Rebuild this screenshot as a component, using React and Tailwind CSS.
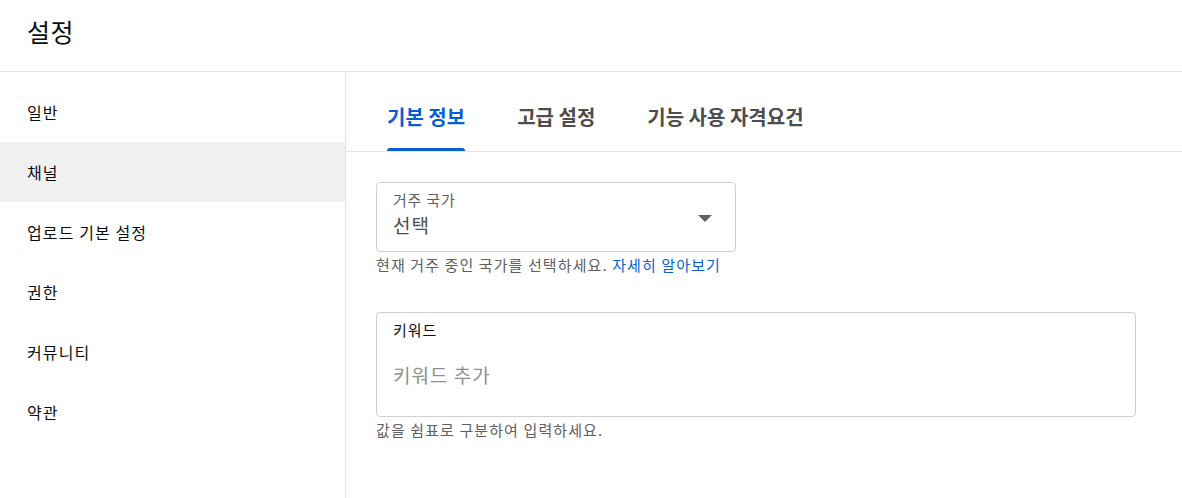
import React from "react";

const font = { fontFamily: '"Noto Sans CJK KR", "Noto Sans", sans-serif' };

export default function App() {
  const items = ["일반", "채널", "업로드 기본 설정", "권한", "커뮤니티", "약관"];
  return (
    <div className="w-[1182px] h-[498px] bg-white flex flex-col text-[#0d0d0d] overflow-hidden" style={font}>
      <div className="h-[72px] shrink-0 border-b border-[#e5e5e5] flex items-center px-[27px]">
        <h1 className="text-[25px] tracking-[0.5px] leading-none font-normal text-[#0d0d0d] -mt-[9px]">설정</h1>
      </div>
      <div className="flex flex-1 min-h-0">
        <nav className="w-[346px] shrink-0 border-r border-[#e5e5e5] pt-[10px] flex flex-col">
          {items.map((t) => (
            <div
              key={t}
              className={`h-[60px] flex items-center px-[27px] text-[16px] tracking-[1.1px] text-[#0d0d0d] ${t === "채널" ? "bg-[#f0f0f0]" : ""}`}
            >
              {t}
            </div>
          ))}
        </nav>
        <main className="flex-1 flex flex-col">
          <div className="h-[80px] border-b border-[#e5e5e5] flex items-end pl-[41px] gap-[52px]">
            <div className="flex flex-col items-stretch">
              <span className="text-[20px] font-bold text-[#065fd4] leading-none pb-[21px]">기본 정보</span>
              <div className="h-[3px] bg-[#065fd4] rounded-t-[3px]" />
            </div>
            <div className="flex flex-col">
              <span className="text-[20px] font-bold text-[#4d4d4d] leading-none pb-[24px]">고급 설정</span>
            </div>
            <div className="flex flex-col">
              <span className="text-[20px] font-bold text-[#4d4d4d] leading-none pb-[24px]">기능 사용 자격요건</span>
            </div>
          </div>
          <div className="pl-[30px] pt-[30px] flex flex-col">
            <div className="w-[360px] h-[70px] border border-[#d0d0d0] rounded-[4px] flex items-center justify-between pl-[16px] pr-[23px]">
              <div className="flex flex-col self-start pt-[8px]">
                <span className="text-[15px] tracking-[0.8px] leading-[18px] text-[#606060]">거주 국가</span>
                <span className="text-[19px] tracking-[1px] leading-[24px] text-[#4d4d4d] mt-[4px]">선택</span>
              </div>
              <svg width="14" height="7" viewBox="0 0 14 7" className="mt-[2px]">
                <path d="M0 0 L14 0 L7 7 Z" fill="#606060" />
              </svg>
            </div>
            <p className="text-[15px] tracking-[1.1px] leading-[18px] text-[#606060] mt-[4px]">
              현재 거주 중인 국가를 선택하세요. <span className="text-[#065fd4]">자세히 알아보기</span>
            </p>
            <div className="w-[760px] h-[105px] border border-[#d0d0d0] rounded-[4px] mt-[38px] pl-[16px] pt-[8px] flex flex-col">
              <span className="text-[15px] tracking-[0.9px] leading-[18px] text-[#0d0d0d]">키워드</span>
              <span className="text-[19px] tracking-[1px] leading-[24px] text-[#909090] mt-[24px]">키워드 추가</span>
            </div>
            <p className="text-[15px] tracking-[1.1px] leading-[18px] text-[#606060] mt-[4px]">값을 쉼표로 구분하여 입력하세요.</p>
          </div>
        </main>
      </div>
    </div>
  );
}
